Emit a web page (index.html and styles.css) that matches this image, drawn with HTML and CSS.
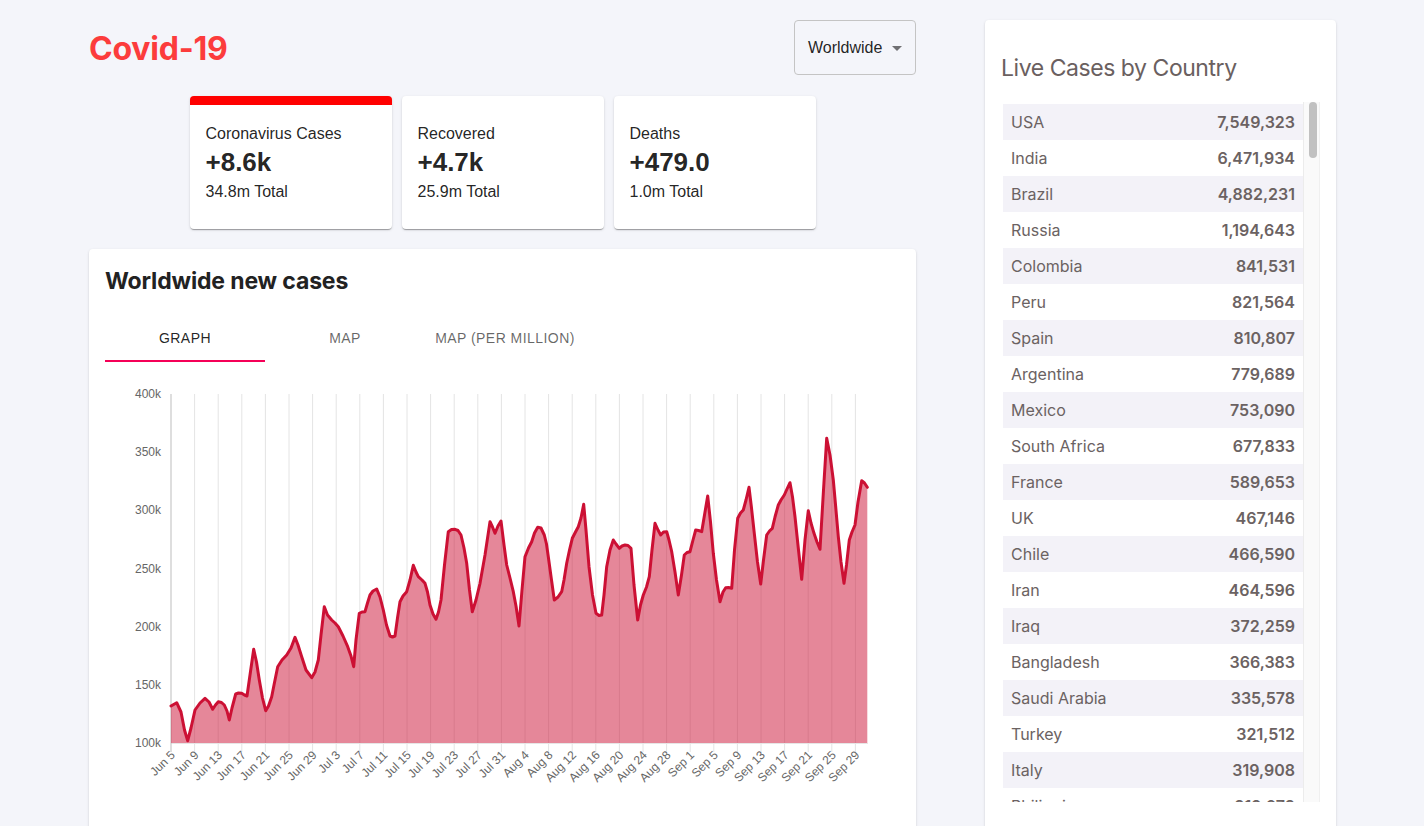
FILE: index.html
```html
<!DOCTYPE html>
<html lang="en">
<head>
<meta charset="utf-8">
<title>Covid-19 Tracker</title>
<link rel="stylesheet" href="styles.css">
</head>
<body>
<div class="app">
  <main class="main">
    <header class="header">
      <h1 class="brand">Covid-19</h1>
      <div class="select">
        <span>Worldwide</span>
        <svg class="select-arrow" width="24" height="24" viewBox="0 0 24 24"><path d="M7 10l5 5 5-5z"/></svg>
      </div>
    </header>

    <section class="stats">
      <div class="stat stat--cases">
        <div class="stat-title">Coronavirus Cases</div>
        <div class="stat-value">+8.6k</div>
        <div class="stat-total">34.8m Total</div>
      </div>
      <div class="stat">
        <div class="stat-title">Recovered</div>
        <div class="stat-value">+4.7k</div>
        <div class="stat-total">25.9m Total</div>
      </div>
      <div class="stat">
        <div class="stat-title">Deaths</div>
        <div class="stat-value">+479.0</div>
        <div class="stat-total">1.0m Total</div>
      </div>
    </section>

    <section class="panel chart-card">
      <h3 class="chart-title">Worldwide new cases</h3>
      <div class="tabs">
        <div class="tab tab--active">Graph</div>
        <div class="tab">Map</div>
        <div class="tab">Map (per million)</div>
      </div>
      <svg class="chart" viewBox="105 362 795 460" width="795" height="460">
        <path class="grid" d="M194.6 394V752M218.2 394V752M241.8 394V752M265.4 394V752M289 394V752M312.6 394V752M336.2 394V752M359.8 394V752M383.4 394V752M407 394V752M430.6 394V752M454.2 394V752M477.8 394V752M501.4 394V752M525 394V752M548.6 394V752M572.2 394V752M595.8 394V752M619.4 394V752M643 394V752M666.6 394V752M690.2 394V752M713.8 394V752M737.4 394V752M761 394V752M784.6 394V752M808.2 394V752M831.8 394V752M855.4 394V752"/>
        <path class="xaxis" d="M171 743.5H868"/>
        <path class="yaxis" d="M171 394V752"/>
        <polygon class="area" points="171,706 176.7,702.7 181,712 184.5,730 187.7,740.7 191,728 195,710 200,703 205,698.3 209,702 212.7,709.3 215.5,705 218.3,701.7 221.5,702.5 224.3,705 227,711 229.3,720 232,708 235.7,694 238.5,693 241.7,693.3 244.5,695 247,696 250,675 253.7,649.3 256.5,662 259.3,680 262.5,698 265.7,710.7 268.5,706 271.7,696.7 274,685 277.7,666.7 282,660 286.7,655 291,648 295,637.3 298,645 301.7,656.7 306,670 311.7,677.7 315,672 318.3,660 321,635 324.3,606.7 327.5,615 331.7,620 335,623 338.3,626.7 343,636 347.7,646.7 351,656 353.7,666.7 356,640 359.3,613.3 362,612 365,611.7 367.5,603 370,595 373,591 376.7,589 380,597 383.3,610 386.5,625 390,636 392.5,637 395,636 397.5,618 400,601.7 403,596 406.7,591.7 410,580 413.3,565.3 416,572 418.3,576.7 422,580 425,583.3 427.5,592 430,605 433,614 436,619.3 438.5,612 441,600 444.5,565 448.3,531.7 451.5,529.5 455,529.3 458,530.5 461,535 464,548 466.7,563.3 469.5,590 472.3,611.7 476,600 480,583.3 485,555 490,521.7 492.5,527 495,533.3 498,526 501,521 504,545 506.7,565 510,578 513.3,591.7 516,606 519,626 522,590 525,556.7 528.5,548 531.7,541.7 534.5,533 537.7,527.3 541,528 544.3,535 546.5,544 548.3,556.7 551.5,580 554.3,600 558,597 561.7,591.7 564,580 566.7,563.3 569.5,550 572.3,538.3 575.5,532 578.3,526.7 581,518 583.7,504.3 586,530 589,566.7 592.5,595 596,613.3 599,615.5 601.7,615 604,595 606.7,566.7 610,550 613.3,540 616,544 619.3,548.3 622,546 625,545 628,545.5 631,548.3 634,585 637.7,620 640.5,605 643.3,595 646.5,587 649.3,576.7 652,550 655,523.3 658,530 660.7,535 663.5,532 666.7,531.7 669,540 671.7,551.7 675,572 678.3,595 681.5,575 684.3,555 687,552.5 690,551.7 693,540 695.7,530 698.5,530.5 701.7,531.7 704.5,515 707.7,496 710.5,522 713.3,553.3 716.5,580 720,601.7 723,592 725.7,587.7 728.5,587.5 731.7,588.3 734.5,550 737.7,518.3 740.5,513 743.3,510 746,500 749,487.3 751.5,508 754.3,533.3 757.5,562 760.7,584 763.5,560 766.7,535 769.5,531 772.3,528.3 775,517 778.3,505 781,500 784.3,495 787,489 790,482.7 792.5,497 795,516.7 798.5,550 801.7,579.3 805,540 808.3,510.7 811,523 814,533.3 817,542 820,549.3 823.5,490 826.7,438.3 830,455 833.3,480 835.8,508 838.3,536.7 841,562 844,583.3 846.5,565 849.3,540 852,532 855,525 858,502 861.7,480.7 864.5,483 867.3,487.3 867.3,743 171,743"/>
        <polyline class="line" points="171,706 176.7,702.7 181,712 184.5,730 187.7,740.7 191,728 195,710 200,703 205,698.3 209,702 212.7,709.3 215.5,705 218.3,701.7 221.5,702.5 224.3,705 227,711 229.3,720 232,708 235.7,694 238.5,693 241.7,693.3 244.5,695 247,696 250,675 253.7,649.3 256.5,662 259.3,680 262.5,698 265.7,710.7 268.5,706 271.7,696.7 274,685 277.7,666.7 282,660 286.7,655 291,648 295,637.3 298,645 301.7,656.7 306,670 311.7,677.7 315,672 318.3,660 321,635 324.3,606.7 327.5,615 331.7,620 335,623 338.3,626.7 343,636 347.7,646.7 351,656 353.7,666.7 356,640 359.3,613.3 362,612 365,611.7 367.5,603 370,595 373,591 376.7,589 380,597 383.3,610 386.5,625 390,636 392.5,637 395,636 397.5,618 400,601.7 403,596 406.7,591.7 410,580 413.3,565.3 416,572 418.3,576.7 422,580 425,583.3 427.5,592 430,605 433,614 436,619.3 438.5,612 441,600 444.5,565 448.3,531.7 451.5,529.5 455,529.3 458,530.5 461,535 464,548 466.7,563.3 469.5,590 472.3,611.7 476,600 480,583.3 485,555 490,521.7 492.5,527 495,533.3 498,526 501,521 504,545 506.7,565 510,578 513.3,591.7 516,606 519,626 522,590 525,556.7 528.5,548 531.7,541.7 534.5,533 537.7,527.3 541,528 544.3,535 546.5,544 548.3,556.7 551.5,580 554.3,600 558,597 561.7,591.7 564,580 566.7,563.3 569.5,550 572.3,538.3 575.5,532 578.3,526.7 581,518 583.7,504.3 586,530 589,566.7 592.5,595 596,613.3 599,615.5 601.7,615 604,595 606.7,566.7 610,550 613.3,540 616,544 619.3,548.3 622,546 625,545 628,545.5 631,548.3 634,585 637.7,620 640.5,605 643.3,595 646.5,587 649.3,576.7 652,550 655,523.3 658,530 660.7,535 663.5,532 666.7,531.7 669,540 671.7,551.7 675,572 678.3,595 681.5,575 684.3,555 687,552.5 690,551.7 693,540 695.7,530 698.5,530.5 701.7,531.7 704.5,515 707.7,496 710.5,522 713.3,553.3 716.5,580 720,601.7 723,592 725.7,587.7 728.5,587.5 731.7,588.3 734.5,550 737.7,518.3 740.5,513 743.3,510 746,500 749,487.3 751.5,508 754.3,533.3 757.5,562 760.7,584 763.5,560 766.7,535 769.5,531 772.3,528.3 775,517 778.3,505 781,500 784.3,495 787,489 790,482.7 792.5,497 795,516.7 798.5,550 801.7,579.3 805,540 808.3,510.7 811,523 814,533.3 817,542 820,549.3 823.5,490 826.7,438.3 830,455 833.3,480 835.8,508 838.3,536.7 841,562 844,583.3 846.5,565 849.3,540 852,532 855,525 858,502 861.7,480.7 864.5,483 867.3,487.3"/>
        <g class="ylab">
          <text x="161" y="394">400k</text>
          <text x="161" y="452.2">350k</text>
          <text x="161" y="510.3">300k</text>
          <text x="161" y="568.5">250k</text>
          <text x="161" y="626.7">200k</text>
          <text x="161" y="684.8">150k</text>
          <text x="161" y="743">100k</text>
        </g>
        <g class="xlab">
          <text transform="translate(173 753) rotate(-45)">Jun 5</text>
          <text transform="translate(196.6 753) rotate(-45)">Jun 9</text>
          <text transform="translate(220.2 753) rotate(-45)">Jun 13</text>
          <text transform="translate(243.8 753) rotate(-45)">Jun 17</text>
          <text transform="translate(267.4 753) rotate(-45)">Jun 21</text>
          <text transform="translate(291 753) rotate(-45)">Jun 25</text>
          <text transform="translate(314.6 753) rotate(-45)">Jun 29</text>
          <text transform="translate(338.2 753) rotate(-45)">Jul 3</text>
          <text transform="translate(361.8 753) rotate(-45)">Jul 7</text>
          <text transform="translate(385.4 753) rotate(-45)">Jul 11</text>
          <text transform="translate(409 753) rotate(-45)">Jul 15</text>
          <text transform="translate(432.6 753) rotate(-45)">Jul 19</text>
          <text transform="translate(456.2 753) rotate(-45)">Jul 23</text>
          <text transform="translate(479.8 753) rotate(-45)">Jul 27</text>
          <text transform="translate(503.4 753) rotate(-45)">Jul 31</text>
          <text transform="translate(527 753) rotate(-45)">Aug 4</text>
          <text transform="translate(550.6 753) rotate(-45)">Aug 8</text>
          <text transform="translate(574.2 753) rotate(-45)">Aug 12</text>
          <text transform="translate(597.8 753) rotate(-45)">Aug 16</text>
          <text transform="translate(621.4 753) rotate(-45)">Aug 20</text>
          <text transform="translate(645 753) rotate(-45)">Aug 24</text>
          <text transform="translate(668.6 753) rotate(-45)">Aug 28</text>
          <text transform="translate(692.2 753) rotate(-45)">Sep 1</text>
          <text transform="translate(715.8 753) rotate(-45)">Sep 5</text>
          <text transform="translate(739.4 753) rotate(-45)">Sep 9</text>
          <text transform="translate(763 753) rotate(-45)">Sep 13</text>
          <text transform="translate(786.6 753) rotate(-45)">Sep 17</text>
          <text transform="translate(810.2 753) rotate(-45)">Sep 21</text>
          <text transform="translate(833.8 753) rotate(-45)">Sep 25</text>
          <text transform="translate(857.4 753) rotate(-45)">Sep 29</text>
        </g>
      </svg>
    </section>
  </main>

  <aside class="panel side">
    <h3 class="side-title">Live Cases by Country</h3>
    <div class="scroll">
      <div class="list">
        <div class="row"><span>USA</span><b>7,549,323</b></div>
        <div class="row"><span>India</span><b>6,471,934</b></div>
        <div class="row"><span>Brazil</span><b>4,882,231</b></div>
        <div class="row"><span>Russia</span><b>1,194,643</b></div>
        <div class="row"><span>Colombia</span><b>841,531</b></div>
        <div class="row"><span>Peru</span><b>821,564</b></div>
        <div class="row"><span>Spain</span><b>810,807</b></div>
        <div class="row"><span>Argentina</span><b>779,689</b></div>
        <div class="row"><span>Mexico</span><b>753,090</b></div>
        <div class="row"><span>South Africa</span><b>677,833</b></div>
        <div class="row"><span>France</span><b>589,653</b></div>
        <div class="row"><span>UK</span><b>467,146</b></div>
        <div class="row"><span>Chile</span><b>466,590</b></div>
        <div class="row"><span>Iran</span><b>464,596</b></div>
        <div class="row"><span>Iraq</span><b>372,259</b></div>
        <div class="row"><span>Bangladesh</span><b>366,383</b></div>
        <div class="row"><span>Saudi Arabia</span><b>335,578</b></div>
        <div class="row"><span>Turkey</span><b>321,512</b></div>
        <div class="row"><span>Italy</span><b>319,908</b></div>
        <div class="row"><span>Philippines</span><b>319,073</b></div>
      </div>
      <div class="track"><div class="thumb"></div></div>
    </div>
  </aside>
</div>
</body>
</html>
```

FILE: styles.css
```css
html, body {
  margin: 0;
  background: #f4f5fa;
  font-family: "Liberation Sans", Arial, sans-serif;
  overflow: hidden;
}

.app {
  display: flex;
  gap: 69px;
  padding: 20px 88px 0 89px;
}

.main {
  width: 827px;
  flex: none;
}

.header {
  display: flex;
  justify-content: space-between;
  align-items: center;
  height: 55px;
  margin-bottom: 21px;
}

.brand {
  margin: 3px 0 0;
  font: 700 32px/40px Inter, sans-serif;
  color: #fc3c3c;
  letter-spacing: -0.2px;
}

.select {
  width: 122px;
  height: 55px;
  box-sizing: border-box;
  border: 1px solid #c4c4c4;
  border-radius: 4px;
  display: flex;
  align-items: center;
  justify-content: space-between;
  padding: 0 6px 0 13px;
  font-size: 16px;
  color: rgba(0, 0, 0, 0.87);
}

.select-arrow {
  fill: rgba(0, 0, 0, 0.54);
}

.stats {
  display: flex;
  justify-content: center;
  gap: 10px;
}

.stat {
  width: 202px;
  height: 133px;
  box-sizing: border-box;
  background: #fff;
  border-radius: 4px;
  border-top: 9px solid #fff;
  padding: 17px 16px 16px;
  color: rgba(0, 0, 0, 0.87);
  box-shadow: 0 2px 1px -1px rgba(0,0,0,0.2), 0 1px 1px 0 rgba(0,0,0,0.14), 0 1px 3px 0 rgba(0,0,0,0.12);
}

.stat--cases {
  border-top-color: #ff0000;
}

.stat-title {
  font-size: 16px;
  line-height: 24px;
}

.stat-value {
  font-size: 26px;
  font-weight: 700;
  line-height: 32px;
}

.stat-total {
  font-size: 16px;
  line-height: 24px;
  margin-top: 2px;
}

.panel {
  background: #fff;
  border-radius: 4px;
  box-shadow: 0 2px 1px -1px rgba(0,0,0,0.2), 0 1px 1px 0 rgba(0,0,0,0.14), 0 1px 3px 0 rgba(0,0,0,0.12);
}

.chart-card {
  margin-top: 20px;
  padding: 16px 16px 0;
  height: 620px;
  box-sizing: border-box;
}

.chart-title {
  margin: 0;
  font: 700 23px/32px Inter, sans-serif;
  color: #222;
  letter-spacing: -0.15px;
}

.tabs {
  display: flex;
  margin-top: 17px;
}

.tab {
  width: 160px;
  height: 48px;
  display: flex;
  align-items: center;
  justify-content: center;
  font-size: 14px;
  letter-spacing: 0.45px;
  text-transform: uppercase;
  color: rgba(0, 0, 0, 0.6);
}

.tab--active {
  color: rgba(0, 0, 0, 0.87);
  box-shadow: inset 0 -2px 0 #f50057;
}

.chart {
  display: block;
}

.chart .grid {
  stroke: #e4e4e4;
  stroke-width: 1;
  fill: none;
}

.chart .xaxis {
  stroke: #e6e6e6;
  stroke-width: 1;
}

.chart .yaxis {
  stroke: #bdbdbd;
  stroke-width: 1;
}

.chart .area {
  fill: rgba(204, 16, 52, 0.5);
}

.chart .line {
  fill: none;
  stroke: #cc1034;
  stroke-width: 3;
  stroke-linejoin: round;
  stroke-linecap: round;
}

.ylab text {
  font: 12px "Liberation Sans", Arial, sans-serif;
  fill: #666;
  text-anchor: end;
  dominant-baseline: central;
}

.xlab text {
  font: 12px "Liberation Sans", Arial, sans-serif;
  fill: #666;
  text-anchor: end;
  dominant-baseline: central;
}

.side {
  width: 351px;
  flex: none;
  box-sizing: border-box;
  padding: 32px 16px 0;
  height: 830px;
}

.side-title {
  margin: 0 0 18px;
  font: 400 23px/32px Inter, sans-serif;
  color: #6a6060;
  letter-spacing: -0.45px;
}

.scroll {
  display: flex;
  height: 700px;
  padding-left: 2px;
}

.list {
  width: 300px;
  overflow: hidden;
  padding-top: 2px;
}

.row {
  display: flex;
  justify-content: space-between;
  align-items: center;
  height: 36px;
  padding: 0 8px;
  font: 400 16px Inter, sans-serif;
  color: #6b6262;
}

.row:nth-child(odd) {
  background: #f3f2f8;
}

.row b {
  font-weight: 600;
}

.track {
  width: 17px;
  box-sizing: border-box;
  background: #fafafa;
  border-left: 1px solid #ececec;
  border-right: 1px solid #f0f0f0;
}

.thumb {
  width: 8px;
  height: 56px;
  margin-left: 5px;
  border-radius: 4px;
  background: #c1c1c1;
}
```
